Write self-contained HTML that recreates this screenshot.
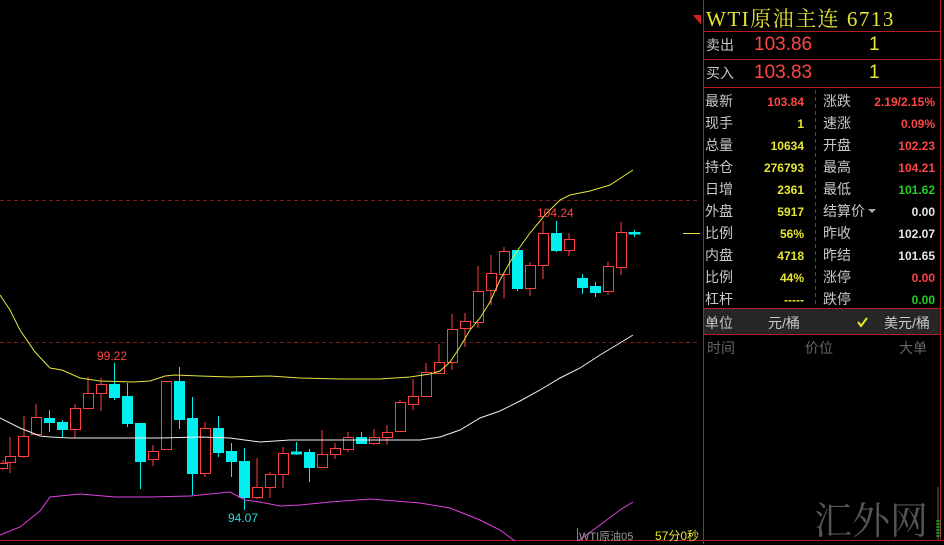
<!DOCTYPE html>
<html><head><meta charset="utf-8"><style>
body{margin:0;background:#000;width:944px;height:544px;overflow:hidden;position:relative;font-family:"Liberation Sans","Noto Sans CJK SC",sans-serif}
.p{position:absolute;white-space:nowrap}
.l{color:#c8c8c8;font-size:14px}
.v{font-size:12px;font-weight:bold;text-align:right}
.y{color:#e6e632}.r{color:#ff4545}.w{color:#e6e6e6}.g{color:#22d022}
</style></head><body>
<svg class="p" style="left:0;top:0" width="944" height="544">
<line x1="0" y1="200.5" x2="700" y2="200.5" stroke="#7a1a1a" stroke-dasharray="4,3"/>
<line x1="0" y1="342.5" x2="700" y2="342.5" stroke="#7a1a1a" stroke-dasharray="4,3"/>
<line x1="703.5" y1="0" x2="703.5" y2="544" stroke="#b41e1e"/>
<line x1="0" y1="540.5" x2="944" y2="540.5" stroke="#b41e1e"/>
<line x1="940.5" y1="0" x2="940.5" y2="541" stroke="#b41e1e"/>
<polygon points="693,15 701,15 701,25" fill="#d02020"/>
<line x1="683" y1="233.5" x2="700" y2="233.5" stroke="#e6e632"/>
<g stroke="#ff4040" fill="#000">
<path d="M3 460V470M10 437V473M24 416V458M36 404V434M75 404V438M88 377V408M101 378V411M153 445V466M166 381V449M205 422V477M257 458V499M270 472V498M283 447V488M322 430V467M335 443V459M348 432V452M374 429V445M387 425V445M400 400V432M413 379V410M426 363V397M439 344V374M452 314V370M465 313V347M478 266V328M491 255V305M504 247V298M530 262V296M543 221V279M569 233V256M608 262V295M621 222V275"/>
<rect x="-2.5" y="463.5" width="10" height="5"/><rect x="5.5" y="456.5" width="10" height="6"/><rect x="18.5" y="436.5" width="10" height="20"/><rect x="31.5" y="417.5" width="10" height="17"/><rect x="70.5" y="408.5" width="10" height="21"/><rect x="83.5" y="393.5" width="10" height="15"/><rect x="96.5" y="384.5" width="10" height="9"/><rect x="148.5" y="451.5" width="10" height="8"/><rect x="161.5" y="381.5" width="10" height="68"/><rect x="200.5" y="428.5" width="10" height="45"/><rect x="252.5" y="487.5" width="10" height="10"/><rect x="265.5" y="474.5" width="10" height="13"/><rect x="278.5" y="453.5" width="10" height="21"/><rect x="317.5" y="454.5" width="10" height="13"/><rect x="330.5" y="448.5" width="10" height="6"/><rect x="343.5" y="437.5" width="10" height="12"/><rect x="369.5" y="437.5" width="10" height="6"/><rect x="382.5" y="432.5" width="10" height="5"/><rect x="395.5" y="402.5" width="10" height="29"/><rect x="408.5" y="396.5" width="10" height="8"/><rect x="421.5" y="372.5" width="10" height="24"/><rect x="434.5" y="362.5" width="10" height="11"/><rect x="447.5" y="329.5" width="10" height="33"/><rect x="460.5" y="321.5" width="10" height="7"/><rect x="473.5" y="291.5" width="10" height="31"/><rect x="486.5" y="273.5" width="10" height="17"/><rect x="499.5" y="251.5" width="10" height="23"/><rect x="525.5" y="265.5" width="10" height="23"/><rect x="538.5" y="233.5" width="10" height="32"/><rect x="564.5" y="239.5" width="10" height="11"/><rect x="603.5" y="266.5" width="10" height="25"/><rect x="616.5" y="232.5" width="10" height="35"/>
</g>
<g stroke="#00f0f0" fill="#00f0f0">
<path d="M49.5 410V432M62.5 420V437M114.5 363V400M127.5 383V427M140.5 423V489M179.5 367V429M192.5 397V495M218.5 416V457M231.5 443V477M244.5 448V510M296.5 442V455M309.5 449V482M361.5 432V443M517.5 250V291M556.5 221V252M582.5 274V294M595.5 282V297M634.5 230V237"/>
<rect x="44.5" y="418.5" width="10" height="4"/><rect x="57.5" y="422.5" width="10" height="7"/><rect x="109.5" y="384.5" width="10" height="13"/><rect x="122.5" y="396.5" width="10" height="27"/><rect x="135.5" y="423.5" width="10" height="38"/><rect x="174.5" y="381.5" width="10" height="38"/><rect x="187.5" y="418.5" width="10" height="55"/><rect x="213.5" y="428.5" width="10" height="24"/><rect x="226.5" y="451.5" width="10" height="10"/><rect x="239.5" y="461.5" width="10" height="36"/><rect x="291.5" y="452" width="10" height="2"/><rect x="304.5" y="452.5" width="10" height="15"/><rect x="356.5" y="437.5" width="10" height="6"/><rect x="512.5" y="250.5" width="10" height="38"/><rect x="551.5" y="233.5" width="10" height="17"/><rect x="577.5" y="278.5" width="10" height="9"/><rect x="590.5" y="286.5" width="10" height="6"/><rect x="629" y="232.5" width="11" height="1.5"/>
</g>
<polyline fill="none" stroke="#e6e640" points="0,295 10,310 20,330 35,352 50,368 62,370 80,378 100,381 133,382 150,381 165,376 175,375 200,376 230,377 270,376 300,378 340,379 380,379 410,377 430,374 440,371 450,362 460,347 470,330 480,318 490,302 500,280 510,262 520,247 530,233 545,215 560,200 570,195 590,191 610,185 633,170"/>
<polyline fill="none" stroke="#f0f0f0" points="0,418 20,428 40,436 50,437 70,438 120,438 160,438 200,437 230,438 260,442 290,440 330,440 380,440 420,440 440,437 460,430 480,418 500,411 520,401 540,390 560,378 580,368 600,355 620,343 633,335"/>
<polyline fill="none" stroke="#e040e0" points="0,535 20,527 40,511 50,497 80,494 115,497 150,497 190,496 230,492 245,500 260,502 280,506 300,505 330,502 370,499 420,503 450,508 480,520 500,530 515,541"/>
<polyline fill="none" stroke="#e040e0" points="578,541 600,525 620,510 633,502"/>
<line x1="577.5" y1="528" x2="577.5" y2="541" stroke="#888"/>
<line x1="938" y1="487" x2="938" y2="540" stroke="#666"/>
<g stroke="#30c030"><path d="M936 521H941M936 524H941M936 527H941M936 530H941M936 533H941M936 536H941"/></g>
<line x1="704" y1="31.5" x2="940" y2="31.5" stroke="#b41e1e"/>
<line x1="704" y1="59.5" x2="940" y2="59.5" stroke="#b41e1e"/>
<line x1="704" y1="87.5" x2="940" y2="87.5" stroke="#b41e1e"/>
<line x1="815.5" y1="90" x2="815.5" y2="307" stroke="#b41e1e" stroke-dasharray="4,3"/>
<rect x="704" y="309" width="236" height="25" fill="#262626"/>
<line x1="704" y1="308.5" x2="940" y2="308.5" stroke="#b41e1e"/>
<line x1="704" y1="334.5" x2="940" y2="334.5" stroke="#b41e1e"/>
<polyline points="858,322 861,326 867,318" fill="none" stroke="#e6e632" stroke-width="2"/>
<polygon points="868,209 876,209 872,213" fill="#aaa"/>
</svg>
<div class="p r" style="left:537px;top:206px;font-size:12px">104.24</div>
<div class="p r" style="left:97px;top:349px;font-size:12px">99.22</div>
<div class="p" style="left:228px;top:511px;font-size:12px;color:#30d8d8">94.07</div>
<div class="p" style="left:579px;top:528px;font-size:11px;color:#999">WTI原油05</div>
<div class="p y" style="left:655px;top:527px;font-size:12px">57分0秒</div>
<div class="p" style="left:814px;top:490px;font-size:38px;color:#555;font-family:'Noto Serif CJK SC',serif">汇外网</div>
<div class="p y" style="left:706px;top:3px;font-size:21px;letter-spacing:1.5px;font-family:'Liberation Serif','Noto Serif CJK SC',serif">WTI原油主连 6713</div>
<div class="p l" style="left:706px;top:35px">卖出</div>
<div class="p r" style="left:754px;top:34px;font-size:19px">103.86</div>
<div class="p y" style="left:869px;top:34px;font-size:19px">1</div>
<div class="p l" style="left:706px;top:63px">买入</div>
<div class="p r" style="left:754px;top:62px;font-size:19px">103.83</div>
<div class="p y" style="left:869px;top:62px;font-size:19px">1</div>
<div class="p" style="left:705px;top:90px;width:100px;line-height:22px">
<div class="l">最新</div><div class="l">现手</div><div class="l">总量</div><div class="l">持仓</div><div class="l">日增</div><div class="l">外盘</div><div class="l">比例</div><div class="l">内盘</div><div class="l">比例</div><div class="l">杠杆</div></div>
<div class="p v" style="left:740px;top:91px;width:64px;line-height:22px">
<div class="r">103.84</div><div class="y">1</div><div class="y">10634</div><div class="y">276793</div><div class="y">2361</div><div class="y">5917</div><div class="y">56%</div><div class="y">4718</div><div class="y">44%</div><div class="y">-----</div></div>
<div class="p" style="left:823px;top:90px;width:100px;line-height:22px">
<div class="l">涨跌</div><div class="l">速涨</div><div class="l">开盘</div><div class="l">最高</div><div class="l">最低</div><div class="l">结算价</div><div class="l">昨收</div><div class="l">昨结</div><div class="l">涨停</div><div class="l">跌停</div></div>
<div class="p v" style="left:850px;top:91px;width:85px;line-height:22px">
<div class="r">2.19/2.15%</div><div class="r">0.09%</div><div class="r">102.23</div><div class="r">104.21</div><div class="g">101.62</div><div class="w">0.00</div><div class="w">102.07</div><div class="w">101.65</div><div class="r">0.00</div><div class="g">0.00</div></div>
<div class="p l" style="left:705px;top:313px">单位</div>
<div class="p l" style="left:768px;top:313px">元/桶</div>
<div class="p l" style="left:884px;top:313px">美元/桶</div>
<div class="p" style="left:707px;top:338px;font-size:14px;color:#666">时间</div>
<div class="p" style="left:805px;top:338px;font-size:14px;color:#666">价位</div>
<div class="p" style="left:899px;top:338px;font-size:14px;color:#666">大单</div>
</body></html>
